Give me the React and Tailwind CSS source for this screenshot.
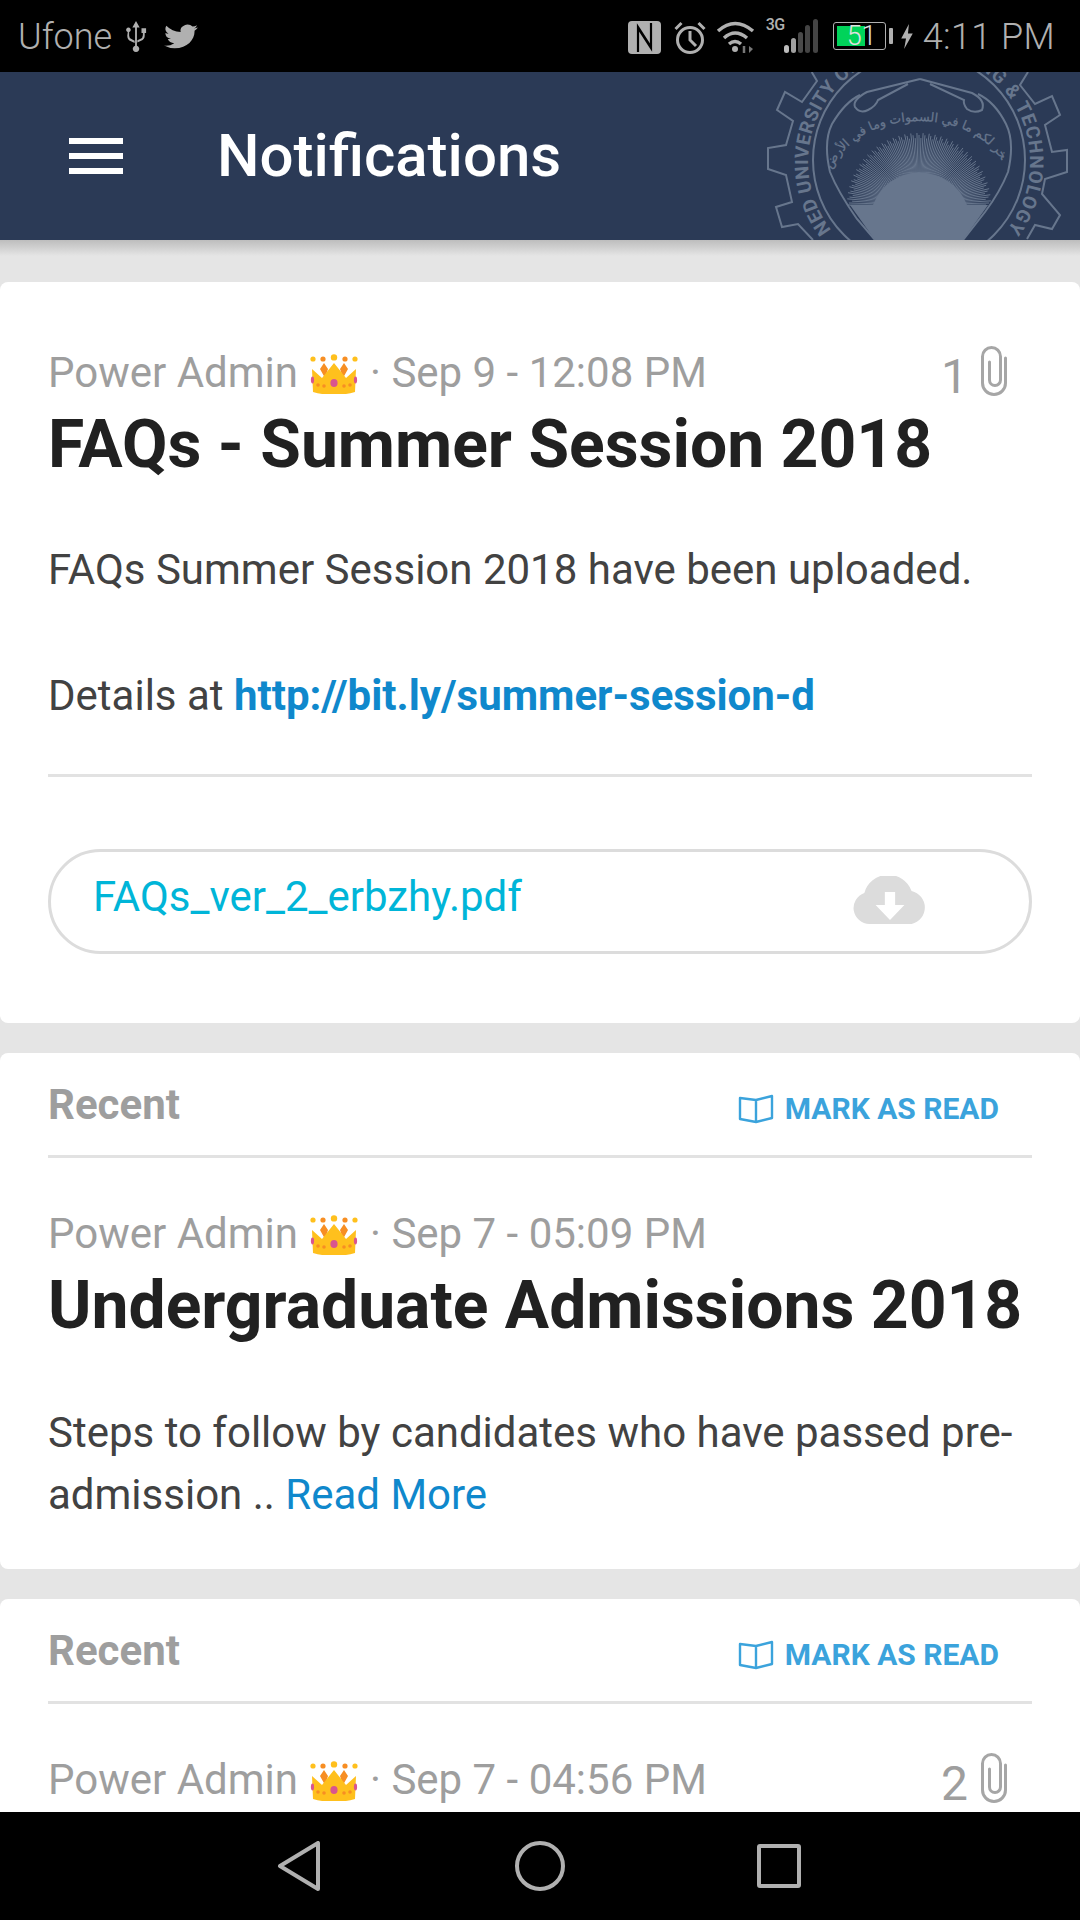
import React from "react";

const Crown = () => (
  <svg width="50" height="40" viewBox="0 0 50 40" className="inline-block shrink-0">
    <g fill="#ffc01d"><circle cx="4" cy="5" r="2.6"/><circle cx="46" cy="5" r="2.6"/><circle cx="25" cy="3.4" r="3.2"/></g>
    <g fill="#f78e23"><circle cx="14" cy="5" r="2.6"/><circle cx="36" cy="5" r="2.6"/>
      <path d="M11 15l4-6 4 6-3 9zM31 15l4-6 4 6-5 9z"/></g>
    <path d="M3 15l10 9 12-15 12 15 10-9-1 23q-11 3-21 3t-21-3z" fill="#ffc01d"/>
    <g fill="#d9558f"><ellipse cx="25" cy="29" rx="3.6" ry="4"/><ellipse cx="3.5" cy="26" rx="1.6" ry="3.4"/><ellipse cx="46.5" cy="26" rx="1.6" ry="3.4"/></g>
    <g fill="#f78e23"><circle cx="9" cy="31" r="1.8"/><circle cx="15" cy="32" r="1.8"/><circle cx="35" cy="32" r="1.8"/><circle cx="41" cy="31" r="1.8"/></g>
  </svg>
);

const Clip = () => (
  <svg width="26" height="50" viewBox="0 0 26 50" fill="none" stroke="#a6a6a6" strokeWidth="3" strokeLinecap="round" className="shrink-0 relative -top-[2px]">
    <path d="M24.5 12V37a11.500 11.500 0 0 1-23 0V10.500a9 9 0 0 1 18 0V34a5.500 5.500 0 0 1-11 0V16" />
  </svg>
);

const Book = () => (
  <svg width="36" height="30" viewBox="0 0 36 30" fill="none" stroke="#3ba3dc" strokeWidth="2.4" strokeLinejoin="round" className="shrink-0">
    <path d="M2 4l16 2 16-4v22l-16 4-16-3zM18 6v22" />
  </svg>
);

const Meta = ({ date, count }) => (
  <div className="flex items-center h-[46px] text-[42px] leading-[46px] text-[#9e9e9e]">
    <span>Power Admin</span>
    <span className="ml-[11px] flex relative top-[1px]"><Crown /></span>
    <span className="ml-[11px]">· {date}</span>
    {count && (
      <span className="ml-auto mr-[25px] flex items-center gap-[13px]">
        <span className="text-[48px] leading-[46px] relative top-[4px]">{count}</span>
        <Clip />
      </span>
    )}
  </div>
);

const RecentHead = () => (
  <div className="mx-[48px] h-[105px] border-b-[3px] border-[#e2e2e2] flex items-start justify-between">
    <span className="mt-[29px] text-[42px] leading-[46px] font-bold text-[#9e9e9e]">Recent</span>
    <span className="mt-[38px] mr-[33px] flex items-center gap-[11px] text-[30px] leading-[36px] font-bold text-[#3ba3dc]">
      <Book /> MARK AS READ
    </span>
  </div>
);

const Logo = () => {
  const rays = [];
  const n = 110;
  for (let i = 0; i <= n; i++) {
    const a = Math.PI + (Math.PI * i) / n;
    const r2 = i % 3 === 0 ? 72 : i % 3 === 1 ? 70 : 67;
    rays.push(
      <line key={i} x1={159 + 30 * Math.cos(a)} y1={133 + 30 * Math.sin(a)} x2={159 + r2 * Math.cos(a)} y2={133 + r2 * Math.sin(a)} />
    );
  }
  return (
    <svg width="320" height="168" viewBox="0 0 320 168" className="absolute left-[760px] top-0" fill="none" stroke="#67768d">
      <defs>
        <path id="ringLeft" d="M71.500 158A111 111 0 0 1 159 -21" />
        <path id="ringRight" d="M48 90A111 111 0 1 1 246.500 158" />
        <path id="scrollPath" d="M74 92Q100 50 159 49Q218 50 244 92" />
      </defs>
      <path strokeWidth="2" d="M51.700 0L57 9 42 30 25 20 17 38 33 49 26 73 8 76 8 97 26 103 32 130 16 135 22 155 38 152 53 168" />
      <path strokeWidth="2" d="M268 0L260 13 275 32 292 24 300 43 285 53 292 80 307 78 307 100 285 107 282 122 300 143 292 157 275 153 267 167" />
      <circle cx="159" cy="88" r="106" strokeWidth="2" />
      <g fill="#67768d" stroke="none">
        <text fontFamily="Roboto, sans-serif" fontWeight="700" fontSize="19" letterSpacing="0.5">
          <textPath href="#ringLeft">NED UNIVERSITY OF</textPath>
        </text>
        <text fontFamily="Roboto, sans-serif" fontWeight="700" fontSize="19" letterSpacing="1" textAnchor="end">
          <textPath href="#ringRight" startOffset="100%">ENGINEERING &amp; TECHNOLOGY</textPath>
        </text>
        <text fontFamily="'DejaVu Sans', sans-serif" fontSize="12.500" textAnchor="middle" stroke="#67768d" strokeWidth="0.3">
          <textPath href="#scrollPath" startOffset="50%">سخر لكم ما في السموات وما في الأرض</textPath>
        </text>
      </g>
      <path strokeWidth="2" d="M115 168L97 147Q78 120 70 100Q63 70 72 52Q85 30 100 23M218 22Q235 30 246 52Q255 70 248 100Q240 120 225 140L203 168" />
      <path strokeWidth="2" d="M160 7L107 20Q92 28 95 35Q100 42 108 38Q116 34 118 28L148 12" />
      <path strokeWidth="2" d="M160 7L212 21Q226 28 222 38Q214 42 207 37Q203 32 204 28L170 12" />
      <g strokeWidth="1">{rays}</g>
      <path d="M90 133H113Q125 103 159 100Q195 103 207 133H228L203 168H115Z" fill="#67768d" stroke="none" />
    </svg>
  );
};

const BackNav = () => (
  <svg width="44" height="50" viewBox="0 0 44 50" fill="none" stroke="#b0b0b0" strokeWidth="4" strokeLinejoin="round"><path d="M41 2V48L3 25Z" /></svg>
);

export default function App() {
  return (
    <div className="w-[1080px] h-[1920px] flex flex-col overflow-hidden bg-[#e5e5e5] font-['Roboto',sans-serif]">
      <div className="h-[72px] shrink-0 bg-black flex items-center text-[#b0b0b0]">
        <span className="ml-[18px] text-[36px] leading-[72px] font-light relative top-[1px]">Ufone</span>
        <svg width="22" height="33" viewBox="0 0 24 36" fill="#b0b0b0" className="ml-[13px] relative top-[1px]" preserveAspectRatio="none">
          <path d="M12 0l4 7h-3v20a3.500 3.500 0 1 1-2 0V7H8z"/><path d="M3 12a2.500 2.500 0 1 1 1.500 0v4q0 3 3 4l3 1.500v2.500l-4-2q-4-1.500-4-6z" /><path d="M18 8h5v5h-1.500v3q0 4-4 5.500l-4 2v-2.500l3-1.500q3-1 3-4v-2.500H18z" />
        </svg>
        <svg width="34" height="29" viewBox="0 0 24 24" fill="#b0b0b0" className="ml-[17px]" preserveAspectRatio="none">
          <path d="M23.950 4.570a10 10 0 0 1-2.820.77 4.960 4.960 0 0 0 2.160-2.720 9.900 9.900 0 0 1-3.120 1.190 4.920 4.920 0 0 0-8.380 4.480A13.930 13.930 0 0 1 1.670 3.150a4.920 4.920 0 0 0 1.520 6.570 4.900 4.900 0 0 1-2.230-.62v.06a4.920 4.920 0 0 0 3.950 4.830 4.990 4.990 0 0 1-2.210.08 4.940 4.940 0 0 0 4.600 3.420A9.870 9.870 0 0 1 0 19.540a14 14 0 0 0 7.560 2.210c9.050 0 14-7.500 14-13.980 0-.21 0-.42-.02-.63a9.940 9.940 0 0 0 2.410-2.570z"/>
        </svg>
        <div className="ml-auto flex items-center">
          <svg width="33" height="33" viewBox="0 0 33 33" className="relative top-[1px]">
            <rect width="33" height="33" rx="4" fill="#b0b0b0" />
            <path d="M10 31V6L23 26M23 2V27L10 7" fill="none" stroke="#000" strokeWidth="2.200" />
          </svg>
          <svg width="32" height="33" viewBox="0 0 32 33" fill="none" stroke="#b0b0b0" strokeWidth="3" className="ml-[13px] relative top-[1px]">
            <circle cx="16" cy="19" r="12.500" /><path d="M16 10v9l6 6M1.500 8l6-6M30.500 8l-6-6" />
          </svg>
          <svg width="39" height="33" viewBox="0 0 39 33" fill="none" stroke="#b0b0b0" strokeWidth="3.500" className="ml-[10px]">
            <path d="M2 11q17-15 35 0M8 18q11-10 23 0M13 24q6-5 12 0" />
            <circle cx="19" cy="29" r="3" fill="#b0b0b0" stroke="none" />
            <path d="M28 26v7" stroke="#777" strokeWidth="2.500" />
            <path d="M33 26v7l4-4z" fill="#777" stroke="none" />
          </svg>
          <div className="w-[52px] h-[34px] relative ml-[11px]">
            <span className="absolute left-0 top-[-3px] text-[16px] leading-[18px] font-medium tracking-[-0.5px]">3G</span>
            <svg width="34" height="34" viewBox="0 0 34 34" className="absolute right-0 top-0">
              <rect x="0" y="26" width="5" height="8" rx="2.500" fill="#bdbdbd" />
              <rect x="7" y="19" width="5" height="15" rx="2.500" fill="#a0a0a0" />
              <rect x="14" y="13" width="5" height="21" rx="2.500" fill="#4a4a4a" />
              <rect x="21" y="6" width="5" height="28" rx="2.500" fill="#444" />
              <rect x="29" y="0" width="5" height="34" rx="2.500" fill="#444" />
            </svg>
          </div>
          <div className="w-[53px] h-[28px] ml-[15px] border-[1.500px] border-[#b0b0b0] rounded-[3px] relative flex items-center">
            <div className="absolute left-[3px] top-[3px] bottom-[3px] w-[28px] bg-[#00d35a]" />
            <span className="relative ml-[13px] text-[27px] leading-[24px] font-light text-[#e0e0e0]">51</span>
          </div>
          <span className="w-[4px] h-[16px] bg-[#b0b0b0] ml-[3px] rounded-[1px]" />
          <svg width="12" height="25" viewBox="0 0 12 26" fill="#b0b0b0" className="ml-[8px]"><path d="M8 0L0 15h5l-2 11 9-16H7z" /></svg>
          <span className="ml-[10px] mr-[25px] text-[36px] leading-[72px] font-light tracking-[0.4px] relative top-[1px]">4:11 PM</span>
        </div>
      </div>

      <div className="h-[168px] shrink-0 bg-[#2b3a56] relative overflow-hidden flex items-center">
        <div className="ml-[69px] w-[54px] flex flex-col gap-[9px]">
          <span className="h-[6px] bg-white" /><span className="h-[6px] bg-white" /><span className="h-[6px] bg-white" />
        </div>
        <h1 className="ml-[94px] text-[60px] leading-[70px] font-medium text-white">Notifications</h1>
        <Logo />
      </div>
      <div className="h-[16px] -mb-[16px] relative shrink-0 bg-gradient-to-b from-[#bdbdbd] to-[#e5e5e5]" />

      <div className="flex-1 min-h-0 overflow-hidden pt-[42px] flex flex-col gap-[30px]">
        <section className="h-[741px] shrink-0 bg-white rounded-[8px]">
          <div className="mx-[48px] pt-[68px]">
            <Meta date="Sep 9 - 12:08 PM" count="1" />
            <h2 className="mt-[11px] text-[66px] leading-[76px] font-bold text-[#212121] whitespace-nowrap">FAQs - Summer Session 2018</h2>
            <p className="mt-[55px] text-[42px] leading-[63px] text-[#424242] whitespace-nowrap">FAQs Summer Session 2018 have been uploaded.</p>
            <p className="mt-[63px] text-[42px] leading-[63px] text-[#424242] whitespace-nowrap">Details at <b className="font-bold text-[#0f88cc]">http://bit.ly/summer-session-d</b></p>
            <div className="mt-[47px] border-t-[3px] border-[#e2e2e2]" />
            <div className="mt-[72px] h-[105px] rounded-[53px] border-[3px] border-[#dcdcdc] flex items-center">
              <span className="ml-[42px] -mt-[9px] text-[42px] leading-[50px] text-[#00b5d8]">FAQs_ver_2_erbzhy.pdf</span>
              <svg width="74" height="48" viewBox="0 0 72 48" className="ml-auto mr-[102px] -mt-[4px]" preserveAspectRatio="none">
                <path d="M16 48a16 16 0 0 1-5-31 24 24 0 0 1 46-2 17 17 0 0 1 0 33z" fill="#dcdcdc" />
                <path d="M31 16h10v13h9L36 44 22 29h9z" fill="#fff" />
              </svg>
            </div>
          </div>
        </section>

        <section className="h-[516px] shrink-0 bg-white rounded-[8px]">
          <RecentHead />
          <div className="mx-[48px] pt-[53px]">
            <Meta date="Sep 7 - 05:09 PM" />
            <h2 className="mt-[11px] text-[66px] leading-[76px] font-bold text-[#212121] whitespace-nowrap">Undergraduate Admissions 2018</h2>
            <p className="mt-[58px] text-[42px] leading-[62px] text-[#424242]">Steps to follow by candidates who have passed pre-<br />admission .. <span className="text-[#0f88cc]">Read More</span></p>
          </div>
        </section>

        <section className="shrink-0 bg-white rounded-t-[8px] h-[300px]">
          <RecentHead />
          <div className="mx-[48px] pt-[53px]">
            <Meta date="Sep 7 - 04:56 PM" count="2" />
          </div>
        </section>
      </div>

      <div className="h-[108px] shrink-0 bg-black relative z-10 flex items-center">
        <div className="ml-[277px] flex"><BackNav /></div>
        <div className="ml-[194px] w-[50px] h-[50px] rounded-full border-[4px] border-[#b0b0b0]" />
        <div className="ml-[192px] w-[44px] h-[44px] rounded-[3px] border-[4px] border-[#b0b0b0]" />
      </div>
    </div>
  );
}
